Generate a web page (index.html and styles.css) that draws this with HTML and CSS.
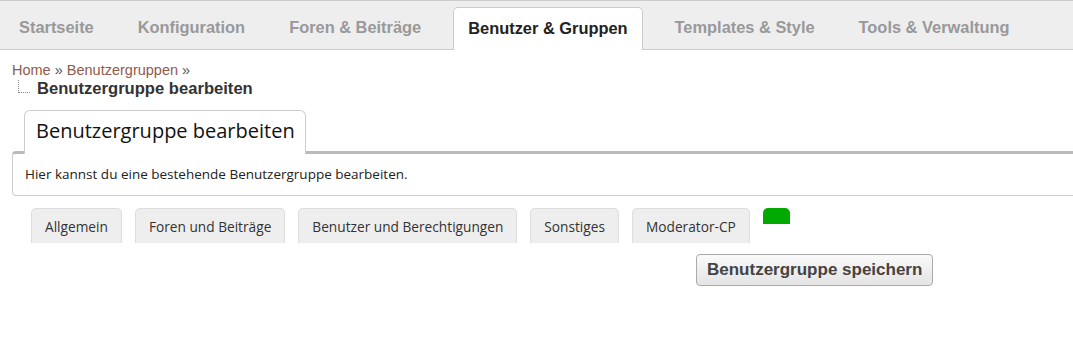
FILE: index.html
```html
<!DOCTYPE html>
<html lang="de">
<head>
  <meta charset="UTF-8" />
  <meta name="viewport" content="width=device-width, initial-scale=1.0" />
  <title>Benutzergruppe bearbeiten</title>
  <link rel="stylesheet" href="styles.css">
</head>
<body>
  <nav class="topnav">
    <a class="nav-item" href="#">Startseite</a>
    <a class="nav-item" href="#">Konfiguration</a>
    <a class="nav-item" href="#">Foren &amp; Beiträge</a>
    <a class="nav-item active" href="#">Benutzer &amp; Gruppen</a>
    <a class="nav-item" href="#">Templates &amp; Style</a>
    <a class="nav-item" href="#">Tools &amp; Verwaltung</a>
  </nav>

  <div class="breadcrumb">
    <a href="#">Home</a> » <a href="#">Benutzergruppen</a> »
  </div>
  <div class="crumb-current">
    <span class="tree-line"></span>
    <span>Benutzergruppe bearbeiten</span>
  </div>

  <div class="panel">
    <div class="panel-tabs">
      <h2 class="panel-tab">Benutzergruppe bearbeiten</h2>
    </div>
    <div class="panel-body">
      Hier kannst du eine bestehende Benutzergruppe bearbeiten.
    </div>
  </div>

  <div class="subtabs">
    <a class="subtab" href="#">Allgemein</a>
    <a class="subtab" href="#">Foren und Beiträge</a>
    <a class="subtab" href="#">Benutzer und Berechtigungen</a>
    <a class="subtab" href="#">Sonstiges</a>
    <a class="subtab" href="#">Moderator-CP</a>
    <span class="subtab-new"></span>
  </div>

  <div class="form-actions">
    <button class="save-btn">Benutzergruppe speichern</button>
  </div>
</body>
</html>
```

FILE: styles.css
```css
body {
  margin: 0;
  font-family: 'Liberation Sans', Arial, sans-serif;
  background: #fff;
  color: #333;
}
a {
  text-decoration: none;
}
.topnav {
  display: flex;
  gap: 14px;
  height: 42px;
  padding: 6px 0 0 4px;
  background: #eee;
  border-top: 1px solid #ccc;
  border-bottom: 1px solid #ccc;
}
.nav-item {
  display: flex;
  align-items: center;
  padding: 0 14px 2px;
  border: 1px solid transparent;
  border-bottom: none;
  border-radius: 5px 5px 0 0;
  font-size: 16.4px;
  font-weight: bold;
  color: #999;
}
.nav-item.active {
  margin: 0 3px -1px;
  background: #fff;
  border-color: #ccc;
  color: #222;
}
.breadcrumb {
  padding: 12px 12px 0;
  font-size: 14.5px;
  line-height: 17px;
  color: #555;
}
.breadcrumb a {
  color: #8f5a4b;
}
.crumb-current {
  display: flex;
  align-items: center;
  gap: 7px;
  padding-left: 18px;
  font-size: 16.6px;
  line-height: 19px;
  font-weight: bold;
  color: #333;
}
.tree-line {
  width: 11px;
  height: 12px;
  margin-top: -4px;
  border-left: 1px dotted #888;
  border-bottom: 1px dotted #888;
}
.panel {
  margin: 12px 0 0 12px;
}
.panel-tabs {
  display: flex;
  padding-left: 12px;
}
.panel-tab {
  position: relative;
  z-index: 1;
  margin: 0 0 -3px;
  padding: 0 10px 0 11px;
  height: 43px;
  line-height: 40px;
  background: #fff;
  border: 1px solid #ccc;
  border-bottom: none;
  border-radius: 6px 6px 0 0;
  font-family: 'Open Sans', sans-serif;
  font-size: 20px;
  font-weight: normal;
  color: #111;
}
.panel-body {
  padding: 12px;
  border: 1px solid #ccc;
  border-top: 3px solid #bbb;
  border-right: none;
  border-radius: 4px 0 0 4px;
  font-family: 'Open Sans', sans-serif;
  font-size: 13.5px;
  line-height: 17px;
  color: #222;
}
.subtabs {
  display: flex;
  align-items: flex-start;
  gap: 13px;
  margin-top: 12px;
  padding-left: 31px;
}
.subtab {
  padding: 2px 13px 0;
  line-height: 32px;
  background: #eee;
  border: 1px solid #ddd;
  border-bottom: none;
  border-radius: 5px 5px 0 0;
  font-family: 'Open Sans', sans-serif;
  font-size: 13.7px;
  color: #333;
}
.subtab-new {
  width: 27px;
  height: 16px;
  background: #0a0;
  border-radius: 5px 5px 0 0;
}
.form-actions {
  margin-top: 11px;
  padding-left: 696px;
}
.save-btn {
  height: 32px;
  padding: 0 10px;
  border: 1px solid #aaa;
  border-radius: 4px;
  background: linear-gradient(#fafafa, #e4e4e4);
  font-family: 'Liberation Sans', Arial, sans-serif;
  font-size: 17px;
  font-weight: bold;
  color: #444;
  cursor: pointer;
}
```
